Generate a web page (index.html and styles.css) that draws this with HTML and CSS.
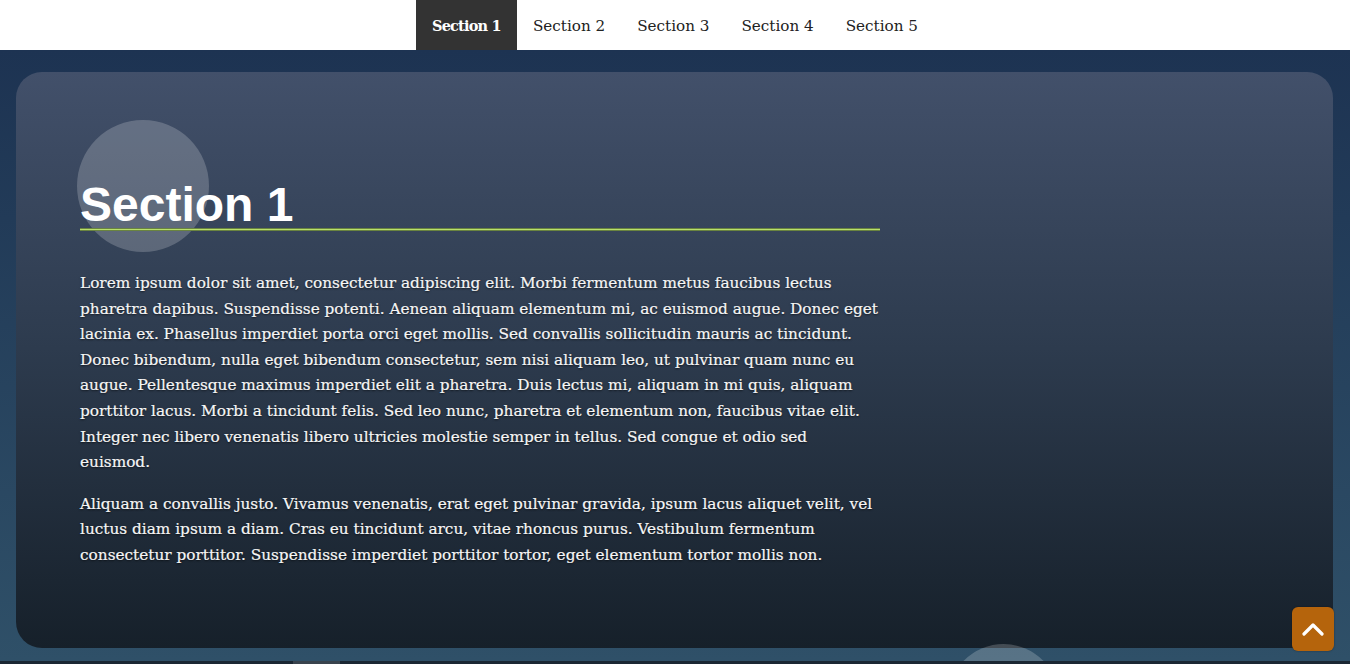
FILE: index.html
```html
<!DOCTYPE html>
<html lang="en">
<head>
<meta charset="utf-8">
<title>Sections</title>
<link rel="stylesheet" href="styles.css">
</head>
<body>
<nav class="nav">
  <ul class="nav-list">
    <li><a class="nav-link active" href="#s1">Section 1</a></li>
    <li><a class="nav-link" href="#s2">Section 2</a></li>
    <li><a class="nav-link" href="#s3">Section 3</a></li>
    <li><a class="nav-link" href="#s4">Section 4</a></li>
    <li><a class="nav-link" href="#s5">Section 5</a></li>
  </ul>
</nav>
<main>
  <section class="section" id="s1">
    <div class="card">
      <span class="bubble"></span>
      <h1 class="title">Section 1</h1>
      <div class="text">
        <p>Lorem ipsum dolor sit amet, consectetur adipiscing elit. Morbi fermentum metus faucibus lectus pharetra dapibus. Suspendisse potenti. Aenean aliquam elementum mi, ac euismod augue. Donec eget lacinia ex. Phasellus imperdiet porta orci eget mollis. Sed convallis sollicitudin mauris ac tincidunt. Donec bibendum, nulla eget bibendum consectetur, sem nisi aliquam leo, ut pulvinar quam nunc eu augue. Pellentesque maximus imperdiet elit a pharetra. Duis lectus mi, aliquam in mi quis, aliquam porttitor lacus. Morbi a tincidunt felis. Sed leo nunc, pharetra et elementum non, faucibus vitae elit. Integer nec libero venenatis libero ultricies molestie semper in tellus. Sed congue et odio sed euismod.</p>
        <p>Aliquam a convallis justo. Vivamus venenatis, erat eget pulvinar gravida, ipsum lacus aliquet velit, vel luctus diam ipsum a diam. Cras eu tincidunt arcu, vitae rhoncus purus. Vestibulum fermentum consectetur porttitor. Suspendisse imperdiet porttitor tortor, eget elementum tortor mollis non.</p>
      </div>
    </div>
    <span class="bubble bubble-next"></span>
  </section>
  <section class="section-next" id="s2">
    <span class="next-block"></span>
  </section>
</main>
<a class="to-top" href="#s1" aria-label="Back to top">
  <svg width="22" height="14" viewBox="0 0 22 14"><path d="M2 12 L11 3 L20 12" fill="none" stroke="#fff" stroke-width="3.2" stroke-linecap="round" stroke-linejoin="round"/></svg>
</a>
</body>
</html>
```
FILE: styles.css
```css
html, body {
  margin: 0;
  padding: 0;
}
body {
  width: 1350px;
  height: 664px;
  overflow: hidden;
  background: #1b2733;
  font-family: "DejaVu Serif", "Liberation Serif", serif;
}
.nav {
  height: 50px;
  background: #fff;
  display: flex;
  justify-content: center;
}
.nav-list {
  list-style: none;
  margin: 0;
  padding: 0;
  display: flex;
}
.nav-link {
  display: flex;
  align-items: center;
  height: 50px;
  padding: 1px 16px 0;
  box-sizing: border-box;
  font-size: 15.2px;
  color: #222;
  text-decoration: none;
}
.nav-link.active {
  background: #333;
  color: #fff;
  font-weight: bold;
  font-size: 14.5px;
  letter-spacing: -0.8px;
}
.section {
  position: relative;
  overflow: hidden;
  height: 611px;
  padding: 22px 17px 0 16px;
  box-sizing: border-box;
  background: linear-gradient(#1d3352, #2f5068);
}
.card {
  position: relative;
  height: 576px;
  box-sizing: border-box;
  padding: 107px 64px 0;
  border-radius: 26px;
  background: linear-gradient(#42506a 0%, #2d3b4e 48%, #16202a 100%);
}
.bubble {
  position: absolute;
  left: 61px;
  top: 48px;
  width: 132px;
  height: 132px;
  border-radius: 50%;
  background: rgba(255, 255, 255, 0.2);
}
.bubble-next {
  left: 948px;
  top: 594px;
  width: 111px;
  height: 111px;
}
.title {
  position: relative;
  width: 800px;
  height: 51px;
  margin: 0;
  font-family: "Liberation Sans", Arial, sans-serif;
  font-size: 48px;
  line-height: 51px;
  font-weight: bold;
  color: #fff;
}
.title::after {
  content: "";
  position: absolute;
  left: 0;
  right: 0;
  bottom: -1px;
  height: 1px;
  background: #b8e06c;
  border-top: 1px solid rgba(10, 20, 10, 0.45);
  border-bottom: 1px solid rgba(10, 20, 10, 0.45);
}
.text {
  width: 800px;
  margin-top: 41px;
  color: #f6f6f6;
  font-size: 15.3px;
  line-height: 25.6px;
  -webkit-text-stroke: 0.2px #f6f6f6;
  text-shadow: 0 1px 2px rgba(0, 0, 0, 0.6);
}
.text p {
  margin: 0 0 16px;
}
.section-next {
  height: 3px;
  background: #1b2733;
  position: relative;
}
.next-block {
  position: absolute;
  left: 293px;
  top: 0;
  width: 47px;
  height: 3px;
  background: #39434d;
}
.to-top {
  position: fixed;
  right: 16px;
  bottom: 13px;
  width: 42px;
  height: 44px;
  border-radius: 6px;
  background: #b5640c;
  display: flex;
  align-items: center;
  justify-content: center;
  box-shadow: 0 0 2px rgba(0, 0, 0, 0.4);
}
```
